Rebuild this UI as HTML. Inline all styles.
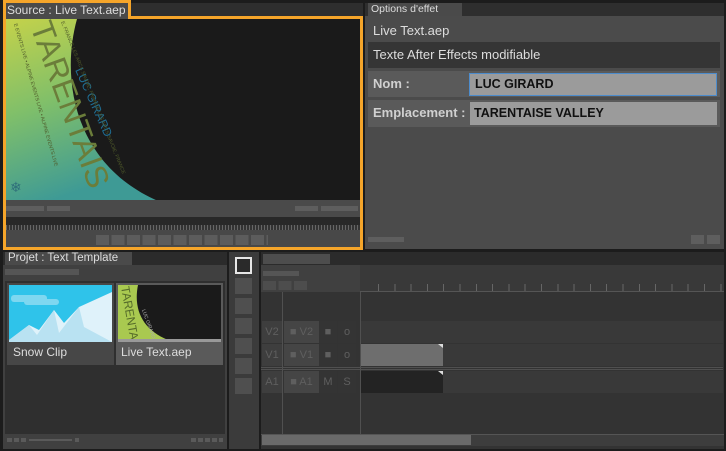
<!DOCTYPE html>
<html><head><meta charset="utf-8"><style>
*{margin:0;padding:0;box-sizing:border-box}
body{width:726px;height:451px;background:#1c1c1c;position:relative;overflow:hidden;font-family:"Liberation Sans","DejaVu Sans",sans-serif;color:#d8d8d8}
.a{position:absolute}
.t{font-size:11px;line-height:13px;color:#ddd;padding-left:3px;white-space:nowrap}
</style></head><body>
<!-- Source panel -->
<div class="a" style="left:128px;top:3px;width:235px;height:13px;background:#2e2e2e"></div>
<div class="a" style="left:3px;top:0;width:128px;height:20px;border:3px solid #f5a52a;border-bottom:none"></div>
<div class="a" style="left:3px;top:16px;width:360px;height:234px;border:3px solid #f5a52a;border-top:none"></div>
<div class="a" style="left:128px;top:16px;width:235px;height:3px;background:#f5a52a"></div>
<div class="a t" style="left:6px;top:3px;width:122px;height:16px;background:#4a4a4a;padding-top:1px;font-size:12px;padding-left:1px">Source : Live Text.aep</div>
<div class="a" style="left:6px;top:19px;width:354px;height:182px;background:#1a1a1a;overflow:hidden">
<svg width="354" height="182" viewBox="6 19 354 182">
<defs><linearGradient id="g" x1="0" y1="0" x2="0.3" y2="1"><stop offset="0" stop-color="#c4d24a"/><stop offset="0.5" stop-color="#7fbf6a"/><stop offset="1" stop-color="#3e9a95"/></linearGradient></defs>
<path d="M6,19 L77,19 C60,80 75,165 158,201 L6,201 Z" fill="url(#g)"/>
<text x="0" y="0" transform="translate(30,26) rotate(70)" font-size="32" fill="#6b7d3a" font-family="Liberation Sans">TARENTAIS</text>
<text x="0" y="0" transform="translate(75,70) rotate(66)" font-size="12" fill="#1f6f96" font-family="Liberation Sans">LUC GIRARD</text>
<text x="0" y="0" transform="translate(61,22) rotate(68)" font-size="5" fill="#4f5a2a">E, FRANCE.LES ARCS SAVOIE, FRANCE.LES ARCS SAVOIE, FRANCE</text>
<text x="0" y="0" transform="translate(14,24) rotate(74)" font-size="5" fill="#4f5a2a">E EVENTS LIVE • ALPINE EVENTS LIVE • ALPINE EVENTS LIVE</text>
<text x="10" y="192" font-size="14" fill="#2f6f7a">❄</text>
</svg></div>
<div class="a" style="left:6px;top:200px;width:354px;height:17px;background:#4a4a4a"></div>
<div class="a" style="left:6px;top:206px;width:38px;height:5px;background:#5e5e5e"></div>
<div class="a" style="left:47px;top:206px;width:23px;height:5px;background:#5e5e5e"></div>
<div class="a" style="left:295px;top:206px;width:23px;height:5px;background:#5e5e5e"></div>
<div class="a" style="left:321px;top:206px;width:37px;height:5px;background:#5e5e5e"></div>
<div class="a" style="left:6px;top:217px;width:354px;height:13px;background:#282828"></div>
<div class="a" style="left:6px;top:225px;width:354px;height:5px;background:repeating-linear-gradient(90deg,#666 0 1px,#333 1px 3px)"></div>
<div class="a" style="left:6px;top:230px;width:354px;height:17px;background:#484848"></div>
<div class="a" style="left:96px;top:235px;width:172px;height:10px;background:repeating-linear-gradient(90deg,#5c5c5c 0 13px,transparent 13px 15.5px)"></div>
<!-- Options panel -->
<div class="a" style="left:365px;top:3px;width:359px;height:13px;background:#2e2e2e"></div>
<div class="a t" style="left:368px;top:3px;width:94px;height:13px;background:#4a4a4a;font-size:10.5px">Options d'effet</div>
<div class="a" style="left:365px;top:16px;width:359px;height:233px;background:#4b4b4b"></div>
<div class="a t" style="left:370px;top:24px;font-size:13px">Live Text.aep</div>
<div class="a t" style="left:368px;top:42px;width:352px;height:26px;background:#353535;font-size:13px;padding:6px 0 0 5px;line-height:14px">Texte After Effects modifiable</div>
<div class="a" style="left:368px;top:71px;width:352px;height:26px;background:#5a5a5a"></div>
<div class="a t" style="left:370px;top:77px;font-size:13px;font-weight:bold;color:#d0d0d0">Nom :</div>
<div class="a" style="left:469px;top:73px;width:248px;height:23px;background:#9b9b9b;border:1px solid #4d8ccc;font-size:12.5px;font-weight:bold;color:#111;padding:3px 0 0 5px">LUC GIRARD</div>
<div class="a" style="left:368px;top:100px;width:352px;height:27px;background:#5a5a5a"></div>
<div class="a t" style="left:370px;top:106px;font-size:13px;font-weight:bold;color:#d0d0d0">Emplacement :</div>
<div class="a" style="left:470px;top:102px;width:247px;height:23px;background:#9b9b9b;font-size:12.5px;font-weight:bold;color:#111;padding:4px 0 0 4px">TARENTAISE VALLEY</div>
<div class="a" style="left:368px;top:237px;width:36px;height:5px;background:#5e5e5e"></div>
<div class="a" style="left:691px;top:235px;width:13px;height:9px;background:#5e5e5e"></div>
<div class="a" style="left:707px;top:235px;width:13px;height:9px;background:#5e5e5e"></div>
<!-- Project -->
<div class="a" style="left:3px;top:252px;width:224px;height:13px;background:#2b2b2b"></div>
<div class="a t" style="left:5px;top:252px;width:127px;height:14px;background:#4a4a4a;font-size:11.5px">Projet : Text Template</div>
<div class="a" style="left:3px;top:265px;width:224px;height:184px;background:#404040"></div>
<div class="a" style="left:5px;top:269px;width:74px;height:6px;background:#555"></div>
<div class="a" style="left:5px;top:281px;width:220px;height:153px;background:#2f2f2f"></div>
<div class="a" style="left:7px;top:283px;width:107px;height:82px;background:#474747"></div>
<div class="a" style="left:9px;top:285px;width:103px;height:57px;background:#2fc3ea;overflow:hidden">
<svg width="103" height="57"><rect x="2" y="10" width="36" height="7" rx="3" fill="#7ed7f0"/><rect x="15" y="14" width="35" height="6" rx="3" fill="#7ed7f0"/><rect x="78" y="22" width="25" height="6" rx="3" fill="#7ed7f0"/>
<path d="M0,55 L20,40 L30,45 L45,25 L55,38 L70,22 L103,7 L103,57 L0,57Z" fill="#dff2fa"/><path d="M0,55 L20,40 L28,50 L45,25 L50,48 L70,22 L75,42 L103,57 L0,57Z" fill="#b9e2f2"/></svg></div>
<div class="a t" style="left:10px;top:346px;font-size:12px">Snow Clip</div>
<div class="a" style="left:116px;top:283px;width:107px;height:82px;background:#5a5a5a"></div>
<div class="a" style="left:118px;top:285px;width:103px;height:55px;background:#1a1a1a;overflow:hidden">
<svg width="103" height="55"><path d="M0,0 L20,0 C15,25 25,45 50,55 L0,55Z" fill="#a9c950"/><text transform="translate(3,2) rotate(80)" font-size="12" fill="#556b2a">TARENTA</text><text transform="translate(24,25) rotate(70)" font-size="5" fill="#aaa">LUC GIRARD</text></svg></div>
<div class="a" style="left:118px;top:339px;width:103px;height:3px;background:#999"></div>
<div class="a t" style="left:118px;top:346px;font-size:12px">Live Text.aep</div>
<div class="a" style="left:7px;top:438px;width:20px;height:4px;background:repeating-linear-gradient(90deg,#5a5a5a 0 5px,transparent 5px 7px)"></div>
<div class="a" style="left:29px;top:439px;width:43px;height:2px;background:#5a5a5a"></div>
<div class="a" style="left:75px;top:438px;width:4px;height:4px;background:#5a5a5a"></div>
<div class="a" style="left:191px;top:438px;width:32px;height:4px;background:repeating-linear-gradient(90deg,#5a5a5a 0 5px,transparent 5px 7px)"></div>
<!-- Tools -->
<div class="a" style="left:229px;top:252px;width:30px;height:197px;background:#3b3b3b"></div>
<div class="a" style="left:235px;top:257px;width:17px;height:17px;border:2px solid #e6e6e6;background:#2a2a2a"></div>
<div class="a" style="left:235px;top:278px;width:17px;height:120px;background:repeating-linear-gradient(180deg,#4f4f4f 0 16px,transparent 16px 20px)"></div>
<!-- Timeline -->
<div class="a" style="left:261px;top:252px;width:463px;height:197px;background:#333"></div>
<div class="a" style="left:261px;top:252px;width:463px;height:13px;background:#2b2b2b"></div>
<div class="a" style="left:263px;top:254px;width:67px;height:10px;background:#4d4d4d"></div>
<div class="a" style="left:261px;top:265px;width:99px;height:27px;background:#404040"></div>
<div class="a" style="left:263px;top:271px;width:36px;height:5px;background:#555"></div>
<div class="a" style="left:263px;top:281px;width:44px;height:9px;background:repeating-linear-gradient(90deg,#4d4d4d 0 13px,transparent 13px 15.5px)"></div>
<div class="a" style="left:360px;top:265px;width:364px;height:27px;background:#393939;border-bottom:1px solid #555"></div>
<div class="a" style="left:378px;top:284px;width:345px;height:7px;background:repeating-linear-gradient(90deg,#666 0 1px,transparent 1px 16.3px)"></div>
<div class="a" style="left:282px;top:292px;width:1px;height:142px;background:#505050"></div>
<div class="a" style="left:360px;top:292px;width:1px;height:142px;background:#505050"></div>
<div class="a" style="left:361px;top:321px;width:362px;height:22px;background:#393939"></div>
<div class="a" style="left:361px;top:344px;width:362px;height:22px;background:#393939"></div>
<div class="a" style="left:261px;top:367px;width:462px;height:3px;border-top:1px solid #505050;border-bottom:1px solid #505050"></div>
<div class="a" style="left:361px;top:371px;width:362px;height:22px;background:#393939"></div>
<div class="a" style="left:361px;top:344px;width:82px;height:22px;background:#6e6e6e"></div>
<div class="a" style="left:361px;top:371px;width:82px;height:22px;background:#232323"></div>
<div class="a" style="left:438px;top:344px;width:5px;height:4px;background:#ddd;clip-path:polygon(0 0,100% 0,100% 100%)"></div>
<div class="a" style="left:438px;top:371px;width:5px;height:4px;background:#ddd;clip-path:polygon(0 0,100% 0,100% 100%)"></div>
<div class="a" style="left:262px;top:321px;font-size:11px;line-height:22px;color:#5f5f5f">
<div style="display:flex;height:22px;margin-bottom:1px"><span style="width:20px;background:#3e3e3e;text-align:center">V2</span><span style="width:35px;background:#454545;margin-left:2px;text-align:center">■ V2</span><span style="width:18px;background:#343434;text-align:center">■</span><span style="width:18px;background:#343434;margin-left:1px;text-align:center">o</span></div>
<div style="display:flex;height:22px;margin-bottom:5px"><span style="width:20px;background:#3e3e3e;text-align:center">V1</span><span style="width:35px;background:#454545;margin-left:2px;text-align:center">■ V1</span><span style="width:18px;background:#343434;text-align:center">■</span><span style="width:18px;background:#343434;margin-left:1px;text-align:center">o</span></div>
<div style="display:flex;height:22px"><span style="width:20px;background:#3e3e3e;text-align:center">A1</span><span style="width:35px;background:#454545;margin-left:2px;text-align:center">■ A1</span><span style="width:18px;background:#343434;text-align:center">M</span><span style="width:18px;background:#343434;margin-left:1px;text-align:center">S</span></div>
</div>
<div class="a" style="left:261px;top:434px;width:463px;height:12px;background:#3d3d3d;border-top:1px solid #555"></div>
<div class="a" style="left:262px;top:435px;width:209px;height:10px;background:#6a6a6a"></div>
</body></html>
